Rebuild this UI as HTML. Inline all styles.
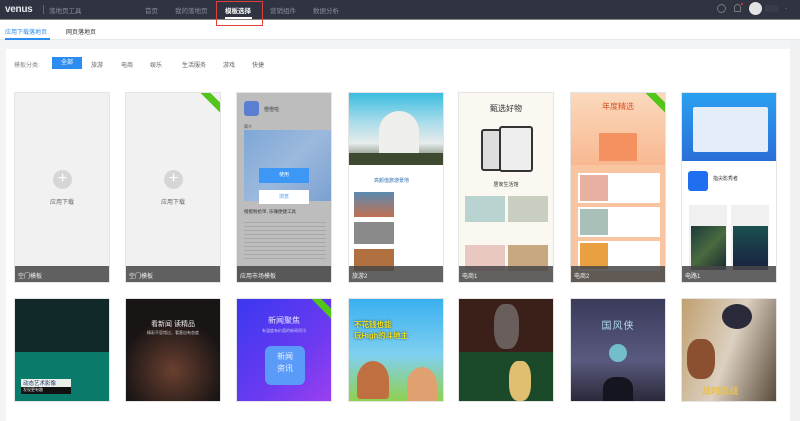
<!DOCTYPE html>
<html><head><meta charset="utf-8">
<style>
*{margin:0;padding:0;box-sizing:border-box}
body{width:800px;height:421px;overflow:hidden;background:#f3f4f5;font-family:"Liberation Sans","Noto Sans CJK SC",sans-serif;position:relative;font-size:6px;color:#555}
.top{position:absolute;left:0;top:0;width:800px;height:19px;background:#2f3342}
.top .n{position:absolute;top:5px;color:#8a8e99;font-size:6.5px}
.tabs{position:absolute;left:0;top:19px;width:800px;height:21px;background:#fff;border-top:1px solid #888;border-bottom:1px solid #e6e8eb}
.panel{position:absolute;left:6px;top:49px;width:784px;height:372px;background:#fff}
.sb{position:absolute;left:790px;top:40px;width:10px;height:381px;background:#f0f1f2}
.c{position:absolute;width:96px;overflow:hidden;background:#f2f1f2;border:1px solid #e4e4e4}
.r1{top:92px;height:191px}
.r2{top:298px;height:104px}
.lab{position:absolute;left:0;bottom:0;width:100%;height:16px;background:rgba(70,70,70,.85);color:#eee;font-size:6px;padding:5px 0 0 3px}
.plus{position:absolute;left:38px;top:77px;width:19px;height:19px;border-radius:50%;background:#d6d6d6;color:#fff;font-size:16px;line-height:18px;text-align:center}
.pt{position:absolute;left:0;width:100%;top:104px;text-align:center;font-size:6px;color:#666}
.rib{position:absolute;right:-10px;top:3px;width:36px;height:7px;background:#52c41a;transform:rotate(45deg)}
.f{position:absolute;top:60px;font-size:6px;color:#666}
</style></head><body>
<div class="top">
 <div style="position:absolute;left:5px;top:4px;color:#e8e8ee;font-size:10px;font-weight:bold;letter-spacing:-.3px">venus</div>
 <div style="position:absolute;left:43px;top:5px;width:1px;height:9px;background:#666"></div>
 <div class="n" style="left:49px">落地页工具</div>
 <div class="n" style="left:145px">首页</div>
 <div class="n" style="left:175px">我的落地页</div>
 <div class="n" style="left:225px;color:#fff;font-weight:bold">模板选择</div>
 <div style="position:absolute;left:225px;top:17px;width:27px;height:2px;background:#fff"></div>
 <div class="n" style="left:270px">营销组件</div>
 <div class="n" style="left:313px">数据分析</div>
 <div style="position:absolute;left:717px;top:4px;width:9px;height:9px;border:1.5px solid #777;border-radius:50%"></div>
 <div style="position:absolute;left:734px;top:4px;width:7px;height:8px;border:1.5px solid #777;border-radius:4px 4px 1px 1px"></div>
 <div style="position:absolute;left:741px;top:3px;width:2px;height:2px;background:#e33;border-radius:50%"></div>
 <div style="position:absolute;left:749px;top:2px;width:13px;height:13px;background:#e4e4e4;border-radius:50%"></div>
 <div style="position:absolute;left:765px;top:5px;width:14px;height:7px;background:#383c4a"></div>
 <div style="position:absolute;left:784px;top:5px;color:#777;font-size:5px">⌄</div>
</div>
<div style="position:absolute;left:216px;top:1px;width:47px;height:25px;border:1px solid #e0403a;z-index:5"></div>
<div class="tabs">
 <div style="position:absolute;left:5px;top:7px;color:#2d8cf0;font-size:6px">应用下载落地页</div>
 <div style="position:absolute;left:5px;top:18px;width:45px;height:1.5px;background:#2d8cf0"></div>
 <div style="position:absolute;left:66px;top:7px;color:#333;font-size:6px">网页落地页</div>
</div>
<div class="sb"></div>
<div class="panel"></div>
<div class="f" style="left:14px;color:#888">模板分类:</div>
<div style="position:absolute;left:52px;top:57px;width:30px;height:12px;background:#2d8cf0;color:#fff;font-size:6px;text-align:center;line-height:12px">全部</div>
<div class="f" style="left:91px">旅游</div>
<div class="f" style="left:121px">电商</div>
<div class="f" style="left:150px">娱乐</div>
<div class="f" style="left:182px">生活服务</div>
<div class="f" style="left:223px">游戏</div>
<div class="f" style="left:252px">快捷</div>

<div class="c r1" style="left:14px"><div class="plus">+</div><div class="pt">应用下载</div><div class="lab">空门模板</div></div>
<div class="c r1" style="left:125px"><div class="plus">+</div><div class="pt">应用下载</div><div class="rib"></div><div class="lab">空门模板</div></div>
<div class="c r1" style="left:236px;background:#bdbdbd">
 <div style="position:absolute;left:7px;top:8px;width:15px;height:15px;background:#5b7fd0;border-radius:3px"></div>
 <div style="position:absolute;left:27px;top:13px;font-size:5px;color:#444">橙橙啦</div>
 <div style="position:absolute;left:7px;top:31px;font-size:4px;color:#444">简介</div>
 <div style="position:absolute;left:7px;top:37px;width:89px;height:71px;background:linear-gradient(135deg,#7ea7d6,#9cb9dd 50%,#7aa0d0)"></div>
 <div style="position:absolute;left:22px;top:75px;width:50px;height:15px;background:#3c97f5;color:#fff;font-size:5px;text-align:center;line-height:15px">使用</div>
 <div style="position:absolute;left:22px;top:97px;width:50px;height:14px;background:#fff;color:#3c97f5;font-size:5px;text-align:center;line-height:14px">浏览</div>
 <div style="position:absolute;left:7px;top:116px;font-size:4.5px;color:#333">橙橙啦抢单, 乐赚便捷工具</div>
 <div style="position:absolute;left:7px;top:126px;width:82px;height:40px;background:repeating-linear-gradient(#bdbdbd 0 3px,#a8a8a8 3px 4px)"></div>
 <div class="lab">应用市场模板</div></div>
<div class="c r1" style="left:348px;background:#fff">
 <div style="position:absolute;left:0;top:0;width:96px;height:72px;background:linear-gradient(#3bbde0,#a9dcea 40%,#e7ecec 70%,#506040)"></div>
 <div style="position:absolute;left:30px;top:18px;width:40px;height:45px;background:#eeeeea;border-radius:20px 20px 0 0"></div>
 <div style="position:absolute;left:0;top:60px;width:96px;height:12px;background:#3d4a30"></div>
 <div style="position:absolute;left:25px;top:84px;font-size:5px;color:#2a6fb0">高颜值旅游景地</div>
 <div style="position:absolute;left:5px;top:99px;width:40px;height:25px;background:linear-gradient(#5a8ab0,#c07050)"></div>
 <div style="position:absolute;left:5px;top:129px;width:40px;height:22px;background:#8a8a8a"></div>
 <div style="position:absolute;left:5px;top:156px;width:40px;height:22px;background:#b07040"></div>
 <div class="lab">旅游2</div></div>
<div class="c r1" style="left:458px;background:#fbf7f1">
 <div style="position:absolute;left:0;top:10px;width:100%;text-align:center;font-size:8px;color:#333">甄选好物</div>
 <div style="position:absolute;left:22px;top:36px;width:30px;height:42px;background:#ddd;border:2px solid #333;border-radius:3px"></div>
 <div style="position:absolute;left:40px;top:33px;width:34px;height:46px;background:#eee;border:2px solid #333;border-radius:3px"></div>
 <div style="position:absolute;left:0;top:88px;width:100%;text-align:center;font-size:5px;color:#333">居家生活馆</div>
 <div style="position:absolute;left:6px;top:103px;width:40px;height:26px;background:#b9d3d0"></div>
 <div style="position:absolute;left:49px;top:103px;width:40px;height:26px;background:#c8cec0"></div>
 <div style="position:absolute;left:6px;top:152px;width:40px;height:26px;background:#e8c8c0"></div>
 <div style="position:absolute;left:49px;top:152px;width:40px;height:26px;background:#c8a880"></div>
 <div class="lab">电商1</div></div>
<div class="c r1" style="left:570px;background:#f9c4a0">
 <div style="position:absolute;left:0;top:0;width:100%;height:72px;background:linear-gradient(#fbd9bd,#f8b890)"></div>
 <div style="position:absolute;left:0;top:8px;width:100%;text-align:center;font-size:8px;color:#d9552a">年度精选</div>
 <div style="position:absolute;left:28px;top:40px;width:38px;height:28px;background:#f59060"></div>
 <div class="rib"></div>
 <div style="position:absolute;left:7px;top:80px;width:82px;height:30px;background:#fff"></div>
 <div style="position:absolute;left:9px;top:82px;width:28px;height:26px;background:#e8b0a0"></div>
 <div style="position:absolute;left:7px;top:114px;width:82px;height:30px;background:#fff"></div>
 <div style="position:absolute;left:9px;top:116px;width:28px;height:26px;background:#a8c0b8"></div>
 <div style="position:absolute;left:7px;top:148px;width:82px;height:30px;background:#fff"></div>
 <div style="position:absolute;left:9px;top:150px;width:28px;height:26px;background:#e8a040"></div>
 <div class="lab">电商2</div></div>
<div class="c r1" style="left:681px;background:#fff">
 <div style="position:absolute;left:0;top:0;width:100%;height:68px;background:linear-gradient(#2aa0f0,#2a6fd8)"></div>
 <div style="position:absolute;left:11px;top:14px;width:75px;height:45px;background:#e4eefa;border-radius:2px"></div>
 <div style="position:absolute;left:6px;top:78px;width:20px;height:20px;background:#1f6ff0;border-radius:3px"></div>
 <div style="position:absolute;left:31px;top:82px;font-size:5px;color:#333">指尖影秀者</div>
 <div style="position:absolute;left:7px;top:112px;width:38px;height:65px;background:#f0f0f0"></div>
 <div style="position:absolute;left:9px;top:133px;width:35px;height:44px;background:linear-gradient(135deg,#1a3a3a,#4a6a40,#1a2a30)"></div>
 <div style="position:absolute;left:49px;top:112px;width:38px;height:65px;background:#f0f0f0"></div>
 <div style="position:absolute;left:51px;top:133px;width:35px;height:44px;background:linear-gradient(#1a5050,#1a2040)"></div>
 <div class="lab">电路1</div></div>

<div class="c r2" style="left:14px;background:linear-gradient(#12292a 0 52%,#0a7a6a 52%)">
 <div style="position:absolute;left:6px;top:80px;width:50px;height:8px;background:#e8f0e8;color:#237;font-size:5.5px;padding-left:2px">动态艺术影像</div>
 <div style="position:absolute;left:6px;top:88px;width:50px;height:7px;background:#111;color:#ddd;font-size:4px;padding-left:2px">发现更有趣</div></div>
<div class="c r2" style="left:125px;background:radial-gradient(circle at 50% 70%,#6a4030,#1a1515 60%)">
 <div style="position:absolute;left:0;top:20px;width:100%;text-align:center;color:#eee;font-size:7px">看新闻 读精品</div>
 <div style="position:absolute;left:0;top:31px;width:100%;text-align:center;color:#ccc;font-size:4px">精彩不容错过，看客自有态度</div></div>
<div class="c r2" style="left:236px;background:linear-gradient(135deg,#3a38f0,#6a3af0 60%,#9a40f0)">
 <div class="rib"></div>
 <div style="position:absolute;left:0;top:16px;width:100%;text-align:center;color:#e8e8ff;font-size:8px">新闻聚焦</div>
 <div style="position:absolute;left:0;top:29px;width:100%;text-align:center;color:#cce;font-size:4px">有温度有价值的新闻资讯</div>
 <div style="position:absolute;left:28px;top:47px;width:40px;height:39px;background:#5a9af8;border-radius:6px;color:#e8f0ff;font-size:8px;text-align:center;padding-top:5px;line-height:12px">新闻<br>资讯</div></div>
<div class="c r2" style="left:348px;background:linear-gradient(#3ab0f0,#80d0f0 55%,#90d050)">
 <div style="position:absolute;left:5px;top:20px;color:#f0e020;font-size:7.5px;font-weight:bold;text-shadow:0 0 2px #135">不花钱也能<br>玩High的斗地主</div>
 <div style="position:absolute;left:8px;top:62px;width:32px;height:38px;background:#c07040;border-radius:50% 50% 10% 10%"></div>
 <div style="position:absolute;left:58px;top:68px;width:30px;height:36px;background:#e0a070;border-radius:50% 50% 10% 10%"></div></div>
<div class="c r2" style="left:458px;background:linear-gradient(#3a2018 0 52%,#1a4a2a 52%)">
 <div style="position:absolute;left:35px;top:5px;width:25px;height:45px;background:#888;opacity:.6;border-radius:40%"></div>
 <div style="position:absolute;left:50px;top:62px;width:22px;height:40px;background:#e0c070;border-radius:40%"></div></div>
<div class="c r2" style="left:570px;background:linear-gradient(#3a3a5a,#5a5a80 60%,#2a2a3a)">
 <div style="position:absolute;left:0;top:18px;width:100%;text-align:center;color:#b0d8e8;font-size:10px;letter-spacing:1px">国风侠</div>
 <div style="position:absolute;left:38px;top:45px;width:18px;height:18px;background:#7ad8e0;border-radius:50%;opacity:.8"></div>
 <div style="position:absolute;left:32px;top:78px;width:30px;height:28px;background:#151520;border-radius:40% 40% 0 0"></div></div>
<div class="c r2" style="left:681px;background:linear-gradient(110deg,#c0a070,#dcd0c0 50%,#5a4a3a)">
 <div style="position:absolute;left:40px;top:5px;width:30px;height:25px;background:#2a2a3a;border-radius:50%"></div>
 <div style="position:absolute;left:5px;top:40px;width:28px;height:40px;background:#8a5030;border-radius:40%"></div>
 <div style="position:absolute;left:20px;top:85px;color:#e8c050;font-size:9px;font-weight:bold">战时国战</div></div>
</body></html>
